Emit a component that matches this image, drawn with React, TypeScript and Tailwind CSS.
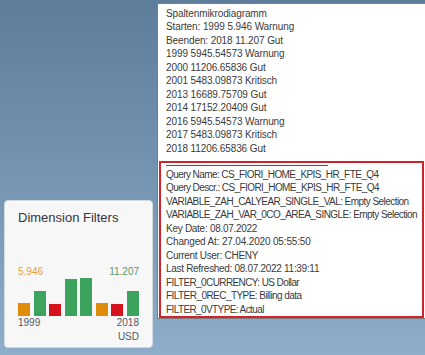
const summaryLines = [
  'Spaltenmikrodiagramm',
  'Starten: 1999 5.946 Warnung',
  'Beenden: 2018 11.207 Gut',
  '1999 5945.54573 Warnung',
  '2000 11206.65836 Gut',
  '2001 5483.09873 Kritisch',
  '2013 16689.75709 Gut',
  '2014 17152.20409 Gut',
  '2016 5945.54573 Warnung',
  '2017 5483.09873 Kritisch',
  '2018 11206.65836 Gut',
]

// caps-heavy lines need tighter tracking to match the original font
const queryLines = [
  { text: 'Query Name: CS_FIORI_HOME_KPIS_HR_FTE_Q4', track: 'tracking-[-0.58px]' },
  { text: 'Query Descr.: CS_FIORI_HOME_KPIS_HR_FTE_Q4', track: 'tracking-[-0.58px]' },
  { text: 'VARIABLE_ZAH_CALYEAR_SINGLE_VAL: Empty Selection', track: 'tracking-[-0.55px]' },
  { text: 'VARIABLE_ZAH_VAR_0CO_AREA_SINGLE: Empty Selection', track: 'tracking-[-0.55px]' },
  { text: 'Key Date: 08.07.2022', track: 'tracking-[-0.28px]' },
  { text: 'Changed At: 27.04.2020 05:55:50', track: 'tracking-[-0.16px]' },
  { text: 'Current User: CHENY', track: 'tracking-[-0.3px]' },
  { text: 'Last Refreshed: 08.07.2022 11:39:11', track: 'tracking-[-0.3px]' },
  { text: 'FILTER_0CURRENCY: US Dollar', track: 'tracking-[-0.6px]' },
  { text: 'FILTER_0REC_TYPE: Billing data', track: 'tracking-[-0.55px]' },
  { text: 'FILTER_0VTYPE: Actual', track: 'tracking-[-0.6px]' },
]

const bars = [
  { h: 13, color: 'bg-[#e08c0b]' },
  { h: 25, color: 'bg-[#3ba35c]' },
  { h: 12, color: 'bg-[#d6131c]' },
  { h: 37, color: 'bg-[#3ba35c]' },
  { h: 38, color: 'bg-[#3ba35c]' },
  { h: 13, color: 'bg-[#e08c0b]' },
  { h: 12, color: 'bg-[#d6131c]' },
  { h: 25, color: 'bg-[#3ba35c]' },
]

function DimensionTile() {
  return (
    <div className="flex h-[148px] w-[149px] flex-col rounded-[4px] border border-[#d2d9e0] bg-[#f7f7f7] pl-[13px] pr-[13px] pt-[9px] font-['Liberation_Sans',Arial,sans-serif] text-[#32363a]">
      <h2 className="whitespace-nowrap text-[13px] leading-[16px]">Dimension Filters</h2>
      <div className="mt-[40px] flex justify-between text-[10px] leading-[12px]">
        <span className="text-[#e3a040]">5.946</span>
        <span className="text-[#55996a]">11.207</span>
      </div>
      <div className="flex h-[38px] items-end justify-between">
        {bars.map((bar, index) => (
          <div key={index} className={`w-[12px] ${bar.color}`} style={{ height: bar.h }} />
        ))}
      </div>
      <div className="mt-[1px] flex justify-between text-[10px] leading-[12px] text-[#55595d]">
        <span>1999</span>
        <span>2018</span>
      </div>
      <div className="mt-[2px] text-right text-[10px] leading-[12px] text-[#55595d]">USD</div>
    </div>
  )
}

export default function App() {
  return (
    <div className="relative h-[355px] w-[425px] overflow-hidden bg-gradient-to-b from-[#5e7d9a] to-[#8eadcb]">
      <div className="pl-[4px] pt-[200px]">
        <DimensionTile />
      </div>

      {/* tooltip */}
      <div className="absolute left-[157px] top-[3px] w-[270px] whitespace-nowrap border border-[#7d7d7d] bg-white pt-[3px] font-['Liberation_Sans',Arial,sans-serif] text-[10px] leading-[13.45px] text-[#3a3a3a]">
        <div className="px-[8px] tracking-[-0.1px]">
          {summaryLines.map((line) => (
            <div key={line}>{line}</div>
          ))}
        </div>
        <div className="ml-[1px] mr-[2px] mt-[6px] border-2 border-[#d2232c] pl-[5px]">
          <div className="mt-[2px] h-px w-[162px] bg-[#555]" />
          <div className="pt-[2px]">
            {queryLines.map((line) => (
              <div key={line.text} className={line.track}>{line.text}</div>
            ))}
          </div>
        </div>
      </div>
    </div>
  )
}
